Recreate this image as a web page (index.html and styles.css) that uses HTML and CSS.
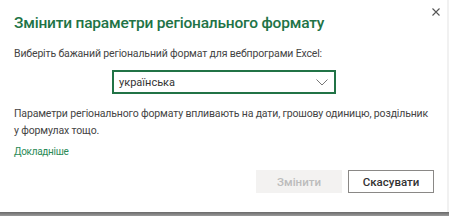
FILE: index.html
```html
<!DOCTYPE html>
<html lang="uk">
<head>
<meta charset="utf-8">
<link rel="stylesheet" href="styles.css">
</head>
<body>
<div class="page">
  <div class="dialog">
    <div class="header">
      <h1 class="title">Змінити параметри регіонального формату</h1>
      <button class="close" aria-label="Закрити">
        <svg width="8" height="8" viewBox="0 0 8 8"><path d="M0.5 0.5 L7.5 7.5 M7.5 0.5 L0.5 7.5" stroke="#555" stroke-width="1.1" fill="none"/></svg>
      </button>
    </div>
    <p class="label">Виберіть бажаний регіональний формат для вебпрограми Excel:</p>
    <div class="select-row">
      <div class="select">
        <span class="select-value">українська</span>
        <svg class="chevron" width="12" height="7" viewBox="0 0 12 7"><path d="M0.5 0.5 L6 6 L11.5 0.5" stroke="#777" stroke-width="1" fill="none"/></svg>
      </div>
    </div>
    <p class="desc">Параметри регіонального формату впливають на дати, грошову одиницю, роздільник<br>у формулах тощо.</p>
    <a class="link" href="#">Докладніше</a>
    <div class="actions">
      <button class="btn btn-disabled" disabled>Змінити</button>
      <button class="btn btn-default">Скасувати</button>
    </div>
  </div>
  <div class="strip"></div>
</div>
</body>
</html>
```
FILE: styles.css
```css
html, body {
  margin: 0;
  padding: 0;
}
body {
  width: 449px;
  height: 216px;
  overflow: hidden;
  background: #f1f1f1;
  font-family: Roboto, "Open Sans", sans-serif;
}
.page {
  display: flex;
  flex-direction: column;
  height: 216px;
}
.dialog {
  width: 447px;
  height: 212px;
  box-sizing: border-box;
  background: #fff;
  padding: 0 0 0 14px;
  display: flex;
  flex-direction: column;
}
.header {
  display: flex;
  justify-content: space-between;
  align-items: flex-start;
}
.title {
  margin: 13px 0 0 0;
  font-size: 15.5px;
  font-weight: 500;
  letter-spacing: -0.2px;
  color: #217346;
  line-height: 20px;
}
.close {
  border: none;
  background: none;
  padding: 0;
  margin: 8px 7px 0 0;
  width: 8px;
  height: 8px;
  display: flex;
}
.label {
  margin: 14px 0 0 0;
  font-size: 10.5px;
  letter-spacing: -0.15px;
  color: #444;
  line-height: 14px;
}
.select-row {
  display: flex;
  margin-top: 9px;
  padding-left: 98px;
}
.select {
  width: 224px;
  height: 24px;
  box-sizing: border-box;
  border: 2px solid #217346;
  display: flex;
  align-items: center;
  justify-content: space-between;
  padding: 0 6px 0 5px;
}
.select-value {
  font-size: 11px;
  color: #333;
}
.desc {
  margin: 11px 0 0 0;
  width: 430px;
  white-space: nowrap;
  font-size: 10.5px;
  letter-spacing: -0.15px;
  line-height: 17px;
  color: #444;
}
.link {
  margin-top: 6px;
  font-size: 10px;
  letter-spacing: -0.3px;
  color: #2a8a56;
  text-decoration: none;
  align-self: flex-start;
  line-height: 14px;
}
.actions {
  display: flex;
  justify-content: flex-end;
  gap: 6px;
  margin-top: 11px;
  padding-right: 13px;
}
.btn {
  width: 86px;
  height: 23px;
  box-sizing: border-box;
  font-family: inherit;
  font-size: 11.5px;
  font-weight: 500;
  padding: 0;
}
.btn-disabled {
  background: #f3f2f1;
  border: none;
  color: #bcbcbc;
}
.btn-default {
  background: #fff;
  border: 1px solid #8a8886;
  color: #333;
}
.strip {
  height: 4px;
  background: linear-gradient(#6a6a6a, #9a9a9a);
}
```
